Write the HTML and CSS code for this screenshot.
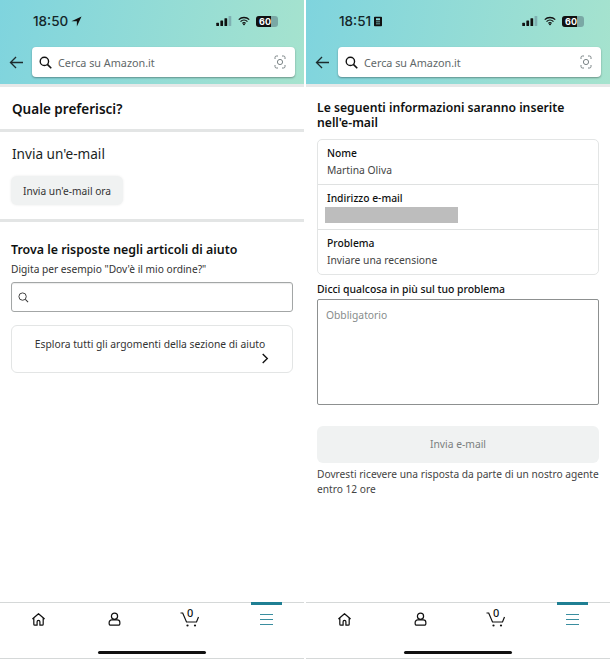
FILE: index.html
```html
<!DOCTYPE html>
<html lang="it">
<head>
    <meta charset="UTF-8">
    <meta name="viewport" content="width=device-width, initial-scale=1.0">
    <title>Amazon - Contattaci</title>
    <link rel="stylesheet" href="styles.css">
</head>
<body>
    <div class="screens">
        <!-- first screen: choose how to get help -->
        <div class="phone">
            <header class="app-header">
                <div class="status-bar">
                    <div class="status-time">18:50
                        <svg class="status-mark" viewBox="0 0 12 12"><path d="M11.500 .5 .5 5.600h5.900V11.500z"/></svg>
                    </div>
                    <div class="status-icons">
                        <svg class="signal" viewBox="0 0 17 11"><rect x="0" y="7.500" width="3" height="3.500" rx=".6"/><rect x="4.500" y="5" width="3" height="6" rx=".6"/><rect x="9" y="2.500" width="3" height="8.500" rx=".6"/><rect class="signal-off" x="13.500" y="0" width="3" height="11" rx=".6"/></svg>
                        <svg class="wifi" viewBox="0 0 16 12"><path d="M1 4.200a10 10 0 0 1 14 0M3.400 6.800a6.600 6.600 0 0 1 9.200 0M5.800 9.200a3.200 3.200 0 0 1 4.400 0" fill="none" stroke="#111" stroke-width="1.700"/><path d="M8 12 6.400 10.200a2.300 2.300 0 0 1 3.200 0z" fill="#111"/></svg>
                        <div class="battery"><span class="battery-level">60</span></div>
                    </div>
                </div>
                <div class="search-row">
                    <svg class="back" viewBox="0 0 16 14"><path d="M15 7H1.500M7.500 1 1.500 7l6 6" fill="none" stroke="#1c2b2d" stroke-width="1.400"/></svg>
                    <div class="search-box">
                        <svg class="search-icon" viewBox="0 0 14 14"><circle cx="5.800" cy="5.800" r="4.500" fill="none" stroke="#111" stroke-width="1.500"/><path d="m9 9 4.200 4.200" stroke="#111" stroke-width="1.700"/></svg>
                        <span class="search-text">Cerca su Amazon.it</span>
                        <svg class="lens" viewBox="0 0 14 14"><path d="M2 4V2.500A1.500 1.500 0 0 1 3.500 1H5M9 1h1.500A1.500 1.500 0 0 1 12 2.500V4M12 10v1.500a1.500 1.500 0 0 1-1.500 1.500H9M5 13H3.500A1.500 1.500 0 0 1 2 11.500V10" fill="none" stroke="#7b8486" stroke-width="1"/><circle cx="7" cy="7" r="2.600" fill="none" stroke="#7b8486" stroke-width="1"/></svg>
                    </div>
                </div>
            </header>
            <main class="content">
                <section class="block block-title">
                    <h2 class="title">Quale preferisci?</h2>
                </section>
                <section class="block block-mail">
                    <h3 class="subtitle">Invia un'e-mail</h3>
                    <button class="btn-small">Invia un'e-mail ora</button>
                </section>
                <section class="block-help">
                    <h2 class="title-small">Trova le risposte negli articoli di aiuto</h2>
                    <p class="hint">Digita per esempio "Dov'è il mio ordine?"</p>
                    <div class="help-search">
                        <svg class="help-search-icon" viewBox="0 0 12 12"><circle cx="5" cy="5" r="4" fill="none" stroke="#333" stroke-width="1"/><path d="m8 8 3 3" stroke="#333" stroke-width="1.100"/></svg>
                        <input class="help-input" type="text" aria-label="Cerca">
                    </div>
                    <div class="explore-card">
                        <span class="explore-text">Esplora tutti gli argomenti della sezione di aiuto</span>
                        <svg class="chevron" viewBox="0 0 8 12"><path d="m1.500 1 5 5-5 5" fill="none" stroke="#111" stroke-width="1.500"/></svg>
                    </div>
                </section>
            </main>
            <nav class="tab-bar">
                <a class="tab"><svg class="tab-icon" viewBox="0 0 16 16"><path d="M1.500 7.500 8 1.800l6.500 5.700M3 6.300V13a1 1 0 0 0 1 1h2.500v-3.500a1.500 1.500 0 0 1 3 0V14H12a1 1 0 0 0 1-1V6.300" fill="none" stroke="#111" stroke-width="1.300" stroke-linejoin="round"/></svg></a>
                <a class="tab"><svg class="tab-icon" viewBox="0 0 16 16"><circle cx="8" cy="4.500" r="3.300" fill="none" stroke="#111" stroke-width="1.300"/><path d="M5 8.500h6a2.700 2.700 0 0 1 2.700 2.700v1.300a1.500 1.500 0 0 1-1.500 1.500H3.800a1.500 1.500 0 0 1-1.500-1.500v-1.300A2.700 2.700 0 0 1 5 8.500z" fill="none" stroke="#111" stroke-width="1.300"/></svg></a>
                <a class="tab tab-cart"><svg class="cart-icon" viewBox="0 0 20 15"><path d="M.5 1h2.200l3.800 9h10L18.500 5" fill="none" stroke="#111" stroke-width="1.200"/><circle cx="7.500" cy="13.500" r="1.100" fill="#111"/><circle cx="15" cy="13.500" r="1.100" fill="#111"/></svg><span class="cart-count">0</span></a>
                <a class="tab tab-active"><span class="menu-icon"></span></a>
                <div class="home-line"></div>
            </nav>
        </div>

        <!-- second screen: e-mail form -->
        <div class="phone">
            <header class="app-header">
                <div class="status-bar">
                    <div class="status-time">18:51
                        <svg class="status-mark status-mark-id" viewBox="0 0 10 12"><path fill-rule="evenodd" d="M1 0h8a1 1 0 0 1 1 1v10a1 1 0 0 1-1 1H1a1 1 0 0 1-1-1V1a1 1 0 0 1 1-1zm1.500 2v2.500h5V2zm0 4v1h5V6zm0 2.500v1h5v-1z"/></svg>
                    </div>
                    <div class="status-icons">
                        <svg class="signal" viewBox="0 0 17 11"><rect x="0" y="7.500" width="3" height="3.500" rx=".6"/><rect x="4.500" y="5" width="3" height="6" rx=".6"/><rect x="9" y="2.500" width="3" height="8.500" rx=".6"/><rect class="signal-off" x="13.500" y="0" width="3" height="11" rx=".6"/></svg>
                        <svg class="wifi" viewBox="0 0 16 12"><path d="M1 4.200a10 10 0 0 1 14 0M3.400 6.800a6.600 6.600 0 0 1 9.200 0M5.800 9.200a3.200 3.200 0 0 1 4.400 0" fill="none" stroke="#111" stroke-width="1.700"/><path d="M8 12 6.400 10.200a2.300 2.300 0 0 1 3.200 0z" fill="#111"/></svg>
                        <div class="battery"><span class="battery-level">60</span></div>
                    </div>
                </div>
                <div class="search-row">
                    <svg class="back" viewBox="0 0 16 14"><path d="M15 7H1.500M7.500 1 1.500 7l6 6" fill="none" stroke="#1c2b2d" stroke-width="1.400"/></svg>
                    <div class="search-box">
                        <svg class="search-icon" viewBox="0 0 14 14"><circle cx="5.800" cy="5.800" r="4.500" fill="none" stroke="#111" stroke-width="1.500"/><path d="m9 9 4.200 4.200" stroke="#111" stroke-width="1.700"/></svg>
                        <span class="search-text">Cerca su Amazon.it</span>
                        <svg class="lens" viewBox="0 0 14 14"><path d="M2 4V2.500A1.500 1.500 0 0 1 3.500 1H5M9 1h1.500A1.500 1.500 0 0 1 12 2.500V4M12 10v1.500a1.500 1.500 0 0 1-1.500 1.500H9M5 13H3.500A1.500 1.500 0 0 1 2 11.500V10" fill="none" stroke="#7b8486" stroke-width="1"/><circle cx="7" cy="7" r="2.600" fill="none" stroke="#7b8486" stroke-width="1"/></svg>
                    </div>
                </div>
            </header>
            <main class="content form-content">
                <h2 class="form-title">Le seguenti informazioni saranno inserite nell'e-mail</h2>
                <div class="info-table">
                    <div class="info-row">
                        <div class="info-label">Nome</div>
                        <div class="info-value">Martina Oliva</div>
                    </div>
                    <div class="info-row">
                        <div class="info-label">Indirizzo e-mail</div>
                        <div class="info-hidden"></div>
                    </div>
                    <div class="info-row">
                        <div class="info-label">Problema</div>
                        <div class="info-value">Inviare una recensione</div>
                    </div>
                </div>
                <label class="field-label" for="details">Dicci qualcosa in più sul tuo problema</label>
                <textarea class="field-text" id="details" placeholder="Obbligatorio"></textarea>
                <button class="btn-send" disabled>Invia e-mail</button>
                <p class="form-note">Dovresti ricevere una risposta da parte di un nostro agente entro 12 ore</p>
            </main>
            <nav class="tab-bar">
                <a class="tab"><svg class="tab-icon" viewBox="0 0 16 16"><path d="M1.500 7.500 8 1.800l6.500 5.700M3 6.300V13a1 1 0 0 0 1 1h2.500v-3.500a1.500 1.500 0 0 1 3 0V14H12a1 1 0 0 0 1-1V6.300" fill="none" stroke="#111" stroke-width="1.300" stroke-linejoin="round"/></svg></a>
                <a class="tab"><svg class="tab-icon" viewBox="0 0 16 16"><circle cx="8" cy="4.500" r="3.300" fill="none" stroke="#111" stroke-width="1.300"/><path d="M5 8.500h6a2.700 2.700 0 0 1 2.700 2.700v1.300a1.500 1.500 0 0 1-1.500 1.500H3.800a1.500 1.500 0 0 1-1.500-1.500v-1.300A2.700 2.700 0 0 1 5 8.500z" fill="none" stroke="#111" stroke-width="1.300"/></svg></a>
                <a class="tab tab-cart"><svg class="cart-icon" viewBox="0 0 20 15"><path d="M.5 1h2.200l3.800 9h10L18.500 5" fill="none" stroke="#111" stroke-width="1.200"/><circle cx="7.500" cy="13.500" r="1.100" fill="#111"/><circle cx="15" cy="13.500" r="1.100" fill="#111"/></svg><span class="cart-count">0</span></a>
                <a class="tab tab-active"><span class="menu-icon"></span></a>
                <div class="home-line"></div>
            </nav>
        </div>
    </div>
</body>
</html>
```

FILE: styles.css
```css
* {
    margin: 0;
    padding: 0;
    box-sizing: border-box;
}

body {
    font-family: 'Noto Sans', sans-serif;
    background: white;
    color: #0f1111;
}

.screens {
    display: flex;
    gap: 2px;
    width: 610px;
    height: 660px;
    overflow: hidden;
}

.phone {
    display: flex;
    flex-direction: column;
    width: 304px;
    height: 660px;
}

/* header */
.app-header {
    height: 84px;
    background: linear-gradient(100deg, #7fd4de 0%, #a6e3ce 100%);
}

.status-bar {
    display: flex;
    justify-content: space-between;
    align-items: center;
    height: 42px;
    padding: 0 26px 0 33px;
}

.status-time {
    display: flex;
    align-items: center;
    gap: 3px;
    font-family: 'Inter', sans-serif;
    font-size: 13.5px;
    font-weight: 500;
    color: #14272a;
}

.status-mark {
    width: 11px;
    height: 11px;
    fill: #111;
}

.status-mark-id {
    width: 8px;
    height: 11px;
}

.status-icons {
    display: flex;
    align-items: center;
    gap: 6px;
}

.signal {
    width: 16px;
    height: 10px;
    fill: #111;
}

.signal-off {
    fill: #7fb0b2;
}

.wifi {
    width: 12px;
    height: 10px;
}

.battery {
    width: 22px;
    height: 11px;
    border-radius: 3px;
    background: #7aa8a5;
    overflow: hidden;
}

.battery-level {
    display: block;
    width: 15px;
    height: 11px;
    background: #111;
    color: white;
    font-family: 'Inter', sans-serif;
    font-size: 9px;
    font-weight: 700;
    line-height: 11px;
    text-align: right;
}

.search-row {
    display: flex;
    align-items: center;
    gap: 8px;
    padding: 5px 9px 0 9px;
}

.back {
    width: 15px;
    height: 13px;
    flex-shrink: 0;
}

.search-box {
    display: flex;
    align-items: center;
    flex: 1;
    height: 30px;
    padding: 0 8px 0 7px;
    background: white;
    border-radius: 4px;
    box-shadow: 0 1px 2px rgba(0, 0, 0, 0.35);
}

.search-icon {
    width: 13px;
    height: 13px;
    flex-shrink: 0;
}

.search-text {
    flex: 1;
    margin: 1px 0 0 6px;
    font-size: 10.8px;
    color: #5f6869;
}

.lens {
    width: 14px;
    height: 14px;
}

/* left screen */
.content {
    flex: 1;
    border-top: 3px solid #e6e8e8;
}

.block {
    border-bottom: 3px solid #e3e5e5;
    padding: 0 12px;
}

.block-title {
    height: 45px;
    padding-top: 12px;
}

.title {
    font-size: 13.5px;
    font-weight: 600;
    line-height: 20px;
}

.block-mail {
    height: 90px;
    padding-top: 12px;
}

.subtitle {
    font-size: 13.6px;
    font-weight: 400;
    line-height: 20px;
    color: #1a1f1f;
}

.btn-small {
    display: block;
    width: 112px;
    height: 29px;
    margin: 12px 0 0 -1px;
    background: #f0f2f2;
    border: none;
    border-radius: 6px;
    box-shadow: 0 0 3px rgba(0, 0, 0, 0.08);
    font-family: inherit;
    font-size: 10.2px;
    color: #333;
}

.block-help {
    padding: 19px 11px 0;
}

.title-small {
    font-size: 12.4px;
    font-weight: 600;
    line-height: 18px;
}

.hint {
    margin-top: 2px;
    font-size: 10.2px;
    line-height: 16px;
    color: #333;
}

.help-search {
    display: flex;
    align-items: center;
    gap: 7px;
    height: 30px;
    margin-top: 5px;
    padding: 0 6px;
    border: 1px solid #a3a6a6;
    border-radius: 3px;
    box-shadow: inset 0 1px 1px rgba(0, 0, 0, 0.08);
}

.help-search-icon {
    width: 11px;
    height: 11px;
    flex-shrink: 0;
}

.help-input {
    flex: 1;
    min-width: 0;
    border: none;
    outline: none;
    background: transparent;
}

.explore-card {
    display: flex;
    flex-direction: column;
    align-items: center;
    height: 48px;
    margin-top: 13px;
    padding: 10px 4px 0 0;
    border: 1px solid #e3e5e5;
    border-radius: 6px;
}

.explore-text {
    font-size: 10.3px;
    line-height: 16px;
    color: #333;
}

.chevron {
    align-self: flex-end;
    width: 8px;
    height: 11px;
    margin: 1px 19px 0 0;
}

/* right screen */
.form-content {
    padding: 13px 11px 0;
}

.form-title {
    font-size: 12.2px;
    font-weight: 600;
    line-height: 15px;
}

.info-table {
    margin-top: 9px;
    border: 1px solid #e3e5e5;
    border-radius: 5px;
}

.info-row {
    height: 45px;
    padding: 5px 9px 0;
    border-bottom: 1px solid #dfe1e1;
}

.info-row:last-child {
    height: 44px;
    border-bottom: none;
}

.info-label {
    font-size: 10.3px;
    font-weight: 500;
    line-height: 16px;
}

.info-value {
    margin-top: 1px;
    font-size: 10.3px;
    line-height: 16px;
    color: #444;
}

.info-hidden {
    width: 133px;
    height: 16px;
    margin: 1px 0 0 -2px;
    background: #bdbdbd;
}

.field-label {
    display: block;
    margin-top: 6px;
    font-size: 10.4px;
    font-weight: 500;
    line-height: 16px;
}

.field-text {
    display: block;
    width: 100%;
    height: 106px;
    margin-top: 2px;
    padding: 8px 8px;
    border: 1px solid #8d9090;
    border-radius: 2px;
    outline: none;
    resize: none;
    font-family: inherit;
    font-size: 10.3px;
}

.field-text::placeholder {
    color: #878c8c;
}

.btn-send {
    display: block;
    width: 100%;
    height: 37px;
    margin-top: 21px;
    padding-bottom: 1px;
    background: #f0f2f2;
    border: none;
    border-radius: 6px;
    font-family: inherit;
    font-size: 10.3px;
    color: #7b8080;
}

.form-note {
    margin-top: 4px;
    font-size: 10.2px;
    line-height: 14.5px;
    color: #444;
}

/* bottom tabs */
.tab-bar {
    position: relative;
    display: grid;
    grid-template-columns: repeat(4, 76px);
    height: 57px;
    margin-bottom: 1px;
    border-top: 1px solid #d5d8d8;
    border-bottom: 1px solid #d5d8d8;
}

.tab {
    position: relative;
    display: flex;
    justify-content: center;
    padding-top: 9px;
}

.tab-icon {
    width: 15px;
    height: 15px;
}

.cart-icon {
    width: 20px;
    height: 15px;
}

.cart-count {
    position: absolute;
    top: 3px;
    left: 35px;
    font-size: 11px;
    font-weight: 500;
    line-height: 13px;
}

.tab-active::after {
    content: "";
    position: absolute;
    top: -1px;
    left: 23px;
    width: 31px;
    height: 3px;
    background: #1f7f93;
}

.menu-icon {
    width: 13px;
    height: 11px;
    margin-top: 2px;
    border-top: 1px solid #3a8ea0;
    border-bottom: 1px solid #3a8ea0;
    background: linear-gradient(#3a8ea0, #3a8ea0) center / 100% 1px no-repeat;
}

.home-line {
    position: absolute;
    left: 98px;
    bottom: 4px;
    width: 108px;
    height: 3px;
    border-radius: 2px;
    background: #111;
}
```
